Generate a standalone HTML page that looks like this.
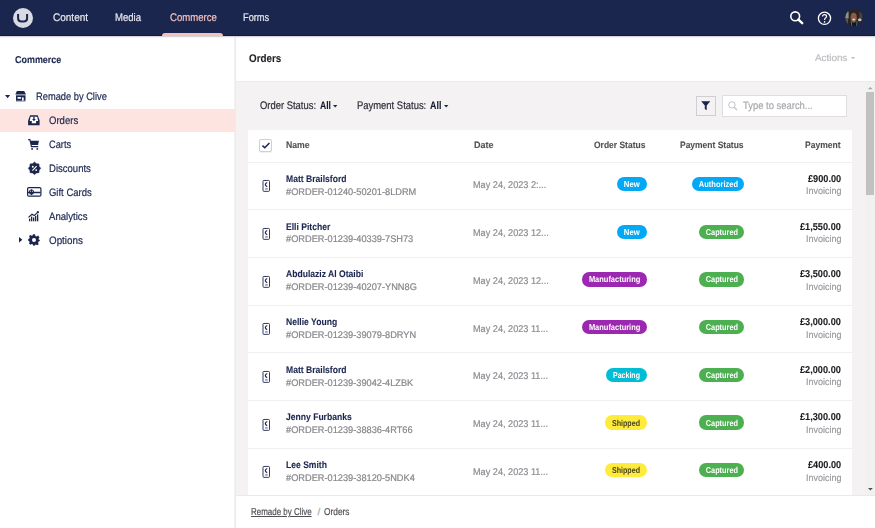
<!DOCTYPE html>
<html><head><meta charset="utf-8">
<style>
html,body{margin:0;padding:0}
body{width:875px;height:528px;overflow:hidden;position:relative;background:#f4f2f3;font-family:"Liberation Sans",sans-serif}
.t{position:absolute;white-space:nowrap;line-height:1;text-rendering:geometricPrecision}
.box{position:absolute}
svg{position:absolute;overflow:visible}
.bd{position:absolute;height:14.4px;border-radius:7.2px;display:flex;align-items:center;justify-content:center;font-size:8.6px;font-weight:700;line-height:1}
.bd span{display:inline-block;white-space:nowrap;padding-top:0.5px;text-rendering:geometricPrecision}
.hl{position:absolute;left:248.4px;width:603.4px;height:1px;background:#efeff1}
.oi{position:absolute}
</style></head>
<body>
<!-- header -->
<div class="box" style="left:0;top:0;width:875px;height:35px;background:#1b264f"></div>
<div class="box" style="left:0;top:35px;width:875px;height:1px;background:#0f1a44"></div>

<div class="box" style="left:162px;top:32.5px;width:61px;height:3px;background:#f5c1bc;border-radius:3px 3px 0 0"></div>
<svg style="left:13px;top:8px" width="20" height="20" viewBox="0 0 20 20"><circle cx="10" cy="10" r="10" fill="#d9dbe3"/><path d="M5.1 5.9 V10.2 Q5.1 13.5 8.6 13.5 H10.6 Q14.1 13.5 14.1 10.2 V5.9" fill="none" stroke="#1b264f" stroke-width="2"/></svg>
<!-- header right icons -->
<svg style="left:789px;top:10px" width="16" height="16" viewBox="0 0 16 16"><circle cx="6.2" cy="6.3" r="4.4" fill="none" stroke="#fff" stroke-width="1.6"/><path d="M9.4 9.6 L13.2 13.2" stroke="#fff" stroke-width="2.4" stroke-linecap="round"/></svg>
<svg style="left:817px;top:10.5px" width="15" height="15" viewBox="0 0 15 15"><circle cx="7.5" cy="7.3" r="6.1" fill="none" stroke="#fff" stroke-width="1.3"/><path d="M5.5 5.6 C5.5 4.3 6.4 3.6 7.5 3.6 C8.7 3.6 9.5 4.3 9.5 5.4 C9.5 6.8 7.6 7 7.6 8.6 L7.6 9.1" fill="none" stroke="#fff" stroke-width="1.2"/><circle cx="7.6" cy="10.9" r="0.8" fill="#fff"/></svg>
<svg style="left:844.5px;top:9.3px" width="18" height="18" viewBox="0 0 18 18"><defs><clipPath id="avc"><circle cx="8.9" cy="8.55" r="8.6"/></clipPath><filter id="bl" x="-20%" y="-20%" width="140%" height="140%"><feGaussianBlur stdDeviation="0.6"/></filter></defs><g clip-path="url(#avc)"><rect width="18" height="18" fill="#2b2522"/><g filter="url(#bl)"><rect x="-1" y="2.5" width="4.6" height="7" fill="#8c9488"/><rect x="-1" y="10" width="4" height="5" fill="#5b554c"/><ellipse cx="14.8" cy="10.8" rx="1.9" ry="1.5" fill="#c4bfb9"/><rect x="14.5" y="3" width="4" height="6" fill="#4d443e"/><ellipse cx="8.7" cy="8.6" rx="3.1" ry="4.8" fill="#8a5c45"/><ellipse cx="8.8" cy="10.5" rx="1.5" ry="1" fill="#ddd0c8"/><rect x="5" y="14" width="8" height="5" fill="#121212"/><path d="M6.3 12.5 L6.9 17.5 M12 12.5 L11.6 17.5" stroke="#3a86a5" stroke-width="0.9"/></g></g></svg>

<!-- sidebar -->
<div class="box" style="left:0;top:37px;width:235px;height:491px;background:#fff"></div>
<div class="box" style="left:234px;top:37px;width:2px;height:491px;background:linear-gradient(90deg,#f5f5f6,#e9e9eb)"></div>
<div class="box" style="left:0;top:109px;width:235px;height:22.5px;background:#fde4e1"></div>
<svg style="left:5px;top:94.6px" width="6" height="4" viewBox="0 0 6 4"><path d="M0 0 H5.2 L2.6 3.2 Z" fill="#1b264f"/></svg>
<svg style="left:15px;top:91px" width="11.5" height="11" viewBox="0 0 11.5 11"><path d="M1.9 0 H9.2 L11 3.5 H0.3 Z" fill="#1b264f"/><rect x="1" y="4.3" width="9.5" height="5.4" fill="#1b264f"/><rect x="2.4" y="5.9" width="3.8" height="1.9" rx="0.9" fill="#fff"/><rect x="7" y="6.4" width="1.7" height="3.3" fill="#fff"/><rect x="1" y="9.7" width="9.5" height="1" fill="#1b264f" opacity=".45"/></svg>
<svg style="left:28px;top:114.6px" width="12.5" height="10.5" viewBox="0 0 12.5 10.5"><path d="M2.1 0.2 H9.7 L11.6 5.4 V10.2 H0.1 V5.4 Z" fill="#1b264f"/><path d="M2.6 1.8 H9.2 L10.1 5.9 H8.1 V8.3 H3.8 V5.9 H1.7 Z" fill="#fff"/><rect x="5.3" y="1.8" width="1.3" height="2.6" fill="#1b264f"/><path d="M4.1 4 H7.8 L5.95 6.3 Z" fill="#1b264f"/></svg>
<svg style="left:28.4px;top:138.6px" width="11.5" height="11.5" viewBox="0 0 11.5 11.5"><path d="M0.2 0.7 H1.9 L3.5 7.6 H10.2" fill="none" stroke="#1b264f" stroke-width="1.2"/><path d="M2.3 1.7 H10.9 L10.1 5.9 H3.3 Z" fill="#1b264f"/><circle cx="4.1" cy="9.9" r="0.95" fill="#1b264f"/><circle cx="9.3" cy="9.9" r="0.95" fill="#1b264f"/></svg>
<svg style="left:27.5px;top:161.8px" width="13" height="13" viewBox="0 0 13 13"><path d="M6.50 0.10 L8.41 1.68 L10.88 1.92 L11.12 4.39 L12.70 6.30 L11.12 8.21 L10.88 10.68 L8.41 10.92 L6.50 12.50 L4.59 10.92 L2.12 10.68 L1.88 8.21 L0.30 6.30 L1.88 4.39 L2.12 1.92 L4.59 1.68 Z" fill="#1b264f" stroke="#1b264f" stroke-width="0.6" stroke-linejoin="round"/><path d="M4.4 8.6 L8.6 4.2" stroke="#fff" stroke-width="1.1"/><circle cx="4.8" cy="4.7" r="0.95" fill="#fff"/><circle cx="8.2" cy="8.1" r="0.95" fill="#fff"/></svg>
<svg style="left:27px;top:187px" width="14.5" height="10" viewBox="0 0 14.5 10"><rect x="0.6" y="0.6" width="13.3" height="8.6" rx="1.2" fill="none" stroke="#1b264f" stroke-width="1.2"/><path d="M1 5.5 H13.5" stroke="#1b264f" stroke-width="1.5"/><circle cx="4.5" cy="5" r="2" fill="none" stroke="#1b264f" stroke-width="1.1"/><path d="M4.5 2.5 V8" stroke="#1b264f" stroke-width="1"/></svg>
<svg style="left:28.3px;top:210.8px" width="11" height="10.5" viewBox="0 0 11 10.5"><path d="M0.5 6.4 L4 3.2 L6.2 4.6 L9.6 1.4" fill="none" stroke="#1b264f" stroke-width="1.2"/><circle cx="9.9" cy="1.2" r="1.1" fill="#1b264f"/><rect x="1" y="7.6" width="1.3" height="2.7" fill="#1b264f"/><rect x="3" y="5.6" width="1.3" height="4.7" fill="#1b264f"/><rect x="5" y="6.4" width="1.3" height="3.9" fill="#1b264f"/><rect x="7" y="4.8" width="1.3" height="5.5" fill="#1b264f"/><rect x="9" y="3.4" width="1.3" height="6.9" fill="#1b264f"/></svg>
<svg style="left:18.9px;top:236.8px" width="4" height="6" viewBox="0 0 4 6"><path d="M0 0 L3.4 2.7 L0 5.4 Z" fill="#1b264f"/></svg>
<svg style="left:28px;top:234px" width="12" height="12" viewBox="0 0 12 12"><path d="M5 0.2 H7 L7.4 1.9 L8.6 2.4 L10.1 1.5 L10.5 1.9 L11.5 3.4 L10.5 4.7 L10.8 5.6 L11.8 6 V7 L10.6 7.6 L10.1 8.7 L10.7 10.2 L9.3 11.3 L8 10.5 L7 11 L6.6 11.8 H5.4 L4.9 10.5 L3.8 10 L2.4 10.8 L1 9.6 L1.6 8.2 L1.2 7.2 L0.2 6.8 V5 L1.4 4.6 L1.7 3.6 L1 2.1 L2.4 0.9 L3.7 1.8 L4.6 1.5 Z" fill="#1b264f"/><circle cx="6" cy="6" r="2" fill="#fff"/></svg>

<!-- main header -->
<div class="box" style="left:236px;top:37px;width:639px;height:44px;background:#fff"></div>
<div class="box" style="left:236px;top:81px;width:639px;height:1px;background:#ebebee"></div>
<svg style="left:851px;top:56.9px" width="5" height="3" viewBox="0 0 5 3"><path d="M0 0 H4.2 L2.1 2.2 Z" fill="#bdbdc2"/></svg>

<!-- filter carets -->
<svg style="left:333.4px;top:104.7px" width="5" height="3" viewBox="0 0 5 3"><path d="M0 0 H4.4 L2.2 2.4 Z" fill="#1b264f"/></svg>
<svg style="left:443.6px;top:104.7px" width="5" height="3" viewBox="0 0 5 3"><path d="M0 0 H4.4 L2.2 2.4 Z" fill="#1b264f"/></svg>
<!-- filter button -->
<div class="box" style="left:696.2px;top:96px;width:17.4px;height:17.7px;border:1px solid #cfcfd3;background:#f4f2f3"></div>
<svg style="left:700.8px;top:101.2px" width="10" height="10" viewBox="0 0 10 10"><path d="M0.2 0.2 H9.3 L5.7 4.4 V9.3 L3.8 8 V4.4 Z" fill="#1b264f"/></svg>
<!-- search box -->
<div class="box" style="left:722.4px;top:95.3px;width:122.6px;height:19.6px;border:1px solid #dedee2;background:#fff"></div>
<svg style="left:727.6px;top:101.2px" width="10" height="10" viewBox="0 0 10 10"><circle cx="3.9" cy="3.9" r="3.2" fill="none" stroke="#c3c3c8" stroke-width="1"/><path d="M6.3 6.3 L9 9" stroke="#c3c3c8" stroke-width="1.3"/></svg>

<!-- table card -->
<div class="box" style="left:248.4px;top:129.6px;width:603.4px;height:366px;background:#fff"></div>
<div class="hl" style="top:161.6px"></div><div class="hl" style="top:209.3px"></div><div class="hl" style="top:257.0px"></div><div class="hl" style="top:304.7px"></div><div class="hl" style="top:352.4px"></div><div class="hl" style="top:400.1px"></div><div class="hl" style="top:447.8px"></div>
<div class="box" style="left:259.2px;top:139.1px;width:10.8px;height:10.8px;border:1px solid #d0d0d4;border-radius:2px;background:#fff;box-shadow:0 0.5px 1px rgba(0,0,0,.06)"></div>
<svg style="left:261px;top:141px" width="10" height="9" viewBox="0 0 10 9"><path d="M1.5 4.6 L3.8 6.8 L8.4 2" fill="none" stroke="#1b264f" stroke-width="1.5"/></svg>
<svg class="oi" style="left:262.4px;top:180.2px" width="8.5" height="12" viewBox="0 0 8.5 12"><rect x="1.0" y="0.45" width="6.5" height="10.9" rx="0.9" fill="none" stroke="#2a3258" stroke-width="0.95"/><path d="M5.2 2.4 C4 3 3.3 3.8 3.3 4.6 C3.3 5.4 4 6.2 5.2 6.8" fill="none" stroke="#1b264f" stroke-width="1.15"/><rect x="3.1" y="8.2" width="2.6" height="1.4" fill="#1b264f" opacity=".55"/></svg>
<svg class="oi" style="left:262.4px;top:227.9px" width="8.5" height="12" viewBox="0 0 8.5 12"><rect x="1.0" y="0.45" width="6.5" height="10.9" rx="0.9" fill="none" stroke="#2a3258" stroke-width="0.95"/><path d="M5.2 2.4 C4 3 3.3 3.8 3.3 4.6 C3.3 5.4 4 6.2 5.2 6.8" fill="none" stroke="#1b264f" stroke-width="1.15"/><rect x="3.1" y="8.2" width="2.6" height="1.4" fill="#1b264f" opacity=".55"/></svg>
<svg class="oi" style="left:262.4px;top:275.6px" width="8.5" height="12" viewBox="0 0 8.5 12"><rect x="1.0" y="0.45" width="6.5" height="10.9" rx="0.9" fill="none" stroke="#2a3258" stroke-width="0.95"/><path d="M5.2 2.4 C4 3 3.3 3.8 3.3 4.6 C3.3 5.4 4 6.2 5.2 6.8" fill="none" stroke="#1b264f" stroke-width="1.15"/><rect x="3.1" y="8.2" width="2.6" height="1.4" fill="#1b264f" opacity=".55"/></svg>
<svg class="oi" style="left:262.4px;top:323.3px" width="8.5" height="12" viewBox="0 0 8.5 12"><rect x="1.0" y="0.45" width="6.5" height="10.9" rx="0.9" fill="none" stroke="#2a3258" stroke-width="0.95"/><path d="M5.2 2.4 C4 3 3.3 3.8 3.3 4.6 C3.3 5.4 4 6.2 5.2 6.8" fill="none" stroke="#1b264f" stroke-width="1.15"/><rect x="3.1" y="8.2" width="2.6" height="1.4" fill="#1b264f" opacity=".55"/></svg>
<svg class="oi" style="left:262.4px;top:371.0px" width="8.5" height="12" viewBox="0 0 8.5 12"><rect x="1.0" y="0.45" width="6.5" height="10.9" rx="0.9" fill="none" stroke="#2a3258" stroke-width="0.95"/><path d="M5.2 2.4 C4 3 3.3 3.8 3.3 4.6 C3.3 5.4 4 6.2 5.2 6.8" fill="none" stroke="#1b264f" stroke-width="1.15"/><rect x="3.1" y="8.2" width="2.6" height="1.4" fill="#1b264f" opacity=".55"/></svg>
<svg class="oi" style="left:262.4px;top:418.7px" width="8.5" height="12" viewBox="0 0 8.5 12"><rect x="1.0" y="0.45" width="6.5" height="10.9" rx="0.9" fill="none" stroke="#2a3258" stroke-width="0.95"/><path d="M5.2 2.4 C4 3 3.3 3.8 3.3 4.6 C3.3 5.4 4 6.2 5.2 6.8" fill="none" stroke="#1b264f" stroke-width="1.15"/><rect x="3.1" y="8.2" width="2.6" height="1.4" fill="#1b264f" opacity=".55"/></svg>
<svg class="oi" style="left:262.4px;top:466.4px" width="8.5" height="12" viewBox="0 0 8.5 12"><rect x="1.0" y="0.45" width="6.5" height="10.9" rx="0.9" fill="none" stroke="#2a3258" stroke-width="0.95"/><path d="M5.2 2.4 C4 3 3.3 3.8 3.3 4.6 C3.3 5.4 4 6.2 5.2 6.8" fill="none" stroke="#1b264f" stroke-width="1.15"/><rect x="3.1" y="8.2" width="2.6" height="1.4" fill="#1b264f" opacity=".55"/></svg>
<div class="bd" style="left:616.8px;top:176.9px;width:29.9px;background:#03a9f4;color:#fff"><span style="transform:scaleX(0.901)">New</span></div>
<div class="bd" style="left:691.7px;top:176.9px;width:52.6px;background:#03a9f4;color:#fff"><span style="transform:scaleX(0.872)">Authorized</span></div>
<div class="bd" style="left:616.8px;top:224.6px;width:29.9px;background:#03a9f4;color:#fff"><span style="transform:scaleX(0.901)">New</span></div>
<div class="bd" style="left:698.6px;top:224.6px;width:45.7px;background:#4caf50;color:#fff"><span style="transform:scaleX(0.854)">Captured</span></div>
<div class="bd" style="left:581.8px;top:272.3px;width:64.9px;background:#9c27b0;color:#fff"><span style="transform:scaleX(0.869)">Manufacturing</span></div>
<div class="bd" style="left:698.6px;top:272.3px;width:45.7px;background:#4caf50;color:#fff"><span style="transform:scaleX(0.854)">Captured</span></div>
<div class="bd" style="left:581.8px;top:320.0px;width:64.9px;background:#9c27b0;color:#fff"><span style="transform:scaleX(0.869)">Manufacturing</span></div>
<div class="bd" style="left:698.6px;top:320.0px;width:45.7px;background:#4caf50;color:#fff"><span style="transform:scaleX(0.854)">Captured</span></div>
<div class="bd" style="left:606.3px;top:367.7px;width:40.4px;background:#00bcd4;color:#fff"><span style="transform:scaleX(0.816)">Packing</span></div>
<div class="bd" style="left:698.6px;top:367.7px;width:45.7px;background:#4caf50;color:#fff"><span style="transform:scaleX(0.854)">Captured</span></div>
<div class="bd" style="left:605.1px;top:415.4px;width:41.6px;background:#ffeb3b;color:#4a4420"><span style="transform:scaleX(0.829)">Shipped</span></div>
<div class="bd" style="left:698.6px;top:415.4px;width:45.7px;background:#4caf50;color:#fff"><span style="transform:scaleX(0.854)">Captured</span></div>
<div class="bd" style="left:605.1px;top:463.1px;width:41.6px;background:#ffeb3b;color:#4a4420"><span style="transform:scaleX(0.829)">Shipped</span></div>
<div class="bd" style="left:698.6px;top:463.1px;width:45.7px;background:#4caf50;color:#fff"><span style="transform:scaleX(0.854)">Captured</span></div>

<!-- scrollbar -->
<div class="box" style="left:865px;top:82px;width:10px;height:413px;background:#f1f1f1"></div>
<div class="box" style="left:866px;top:92px;width:8px;height:103px;background:#c1c1c1"></div>
<svg style="left:867.7px;top:86.6px" width="5" height="3" viewBox="0 0 5 3"><path d="M0 2.2 H4.6 L2.3 0 Z" fill="#a3a3a3"/></svg>
<svg style="left:867.5px;top:488.2px" width="5" height="3" viewBox="0 0 5 3"><path d="M0 0 H4.8 L2.4 2.6 Z" fill="#505050"/></svg>

<!-- footer -->
<div class="box" style="left:236px;top:495px;width:639px;height:33px;background:#fff"></div>
<div class="box" style="left:236px;top:494.5px;width:639px;height:1px;background:#e9e9ec"></div>

<div class="box" style="left:0;top:36px;width:875px;height:1.5px;background:linear-gradient(rgba(0,0,20,.16),rgba(0,0,20,0))"></div>
<span class="t" style="left:52.80px;top:13px;transform-origin:0 0;font-size:11px;font-weight:400;color:#e6e7ee;transform:scaleX(0.9098);-webkit-text-stroke:0.2px currentColor;">Content</span>
<span class="t" style="left:115.40px;top:13px;transform-origin:0 0;font-size:11px;font-weight:400;color:#e6e7ee;transform:scaleX(0.8689);-webkit-text-stroke:0.2px currentColor;">Media</span>
<span class="t" style="left:169.50px;top:13px;transform-origin:0 0;font-size:11px;font-weight:400;color:#f5c1bc;transform:scaleX(0.8720);-webkit-text-stroke:0.2px currentColor;">Commerce</span>
<span class="t" style="left:243.40px;top:13px;transform-origin:0 0;font-size:11px;font-weight:400;color:#e6e7ee;transform:scaleX(0.8401);-webkit-text-stroke:0.2px currentColor;">Forms</span>
<span class="t" style="left:14.50px;top:56px;transform-origin:0 0;font-size:10px;font-weight:700;color:#1b264f;transform:scaleX(0.8959);-webkit-text-stroke:0.1px currentColor;">Commerce</span>
<span class="t" style="left:36.20px;top:92px;transform-origin:0 0;font-size:10.8px;font-weight:400;color:#1b264f;transform:scaleX(0.8613);-webkit-text-stroke:0.2px currentColor;">Remade by Clive</span>
<span class="t" style="left:49.10px;top:116px;transform-origin:0 0;font-size:10.8px;font-weight:400;color:#1b264f;transform:scaleX(0.8840);-webkit-text-stroke:0.2px currentColor;">Orders</span>
<span class="t" style="left:49.10px;top:140px;transform-origin:0 0;font-size:10.8px;font-weight:400;color:#1b264f;transform:scaleX(0.8562);-webkit-text-stroke:0.2px currentColor;">Carts</span>
<span class="t" style="left:49.10px;top:164px;transform-origin:0 0;font-size:10.8px;font-weight:400;color:#1b264f;transform:scaleX(0.8832);-webkit-text-stroke:0.2px currentColor;">Discounts</span>
<span class="t" style="left:49.10px;top:188px;transform-origin:0 0;font-size:10.8px;font-weight:400;color:#1b264f;transform:scaleX(0.8781);-webkit-text-stroke:0.2px currentColor;">Gift Cards</span>
<span class="t" style="left:49.10px;top:212px;transform-origin:0 0;font-size:10.8px;font-weight:400;color:#1b264f;transform:scaleX(0.8903);-webkit-text-stroke:0.2px currentColor;">Analytics</span>
<span class="t" style="left:49.10px;top:236px;transform-origin:0 0;font-size:10.8px;font-weight:400;color:#1b264f;transform:scaleX(0.9098);-webkit-text-stroke:0.2px currentColor;">Options</span>
<span class="t" style="left:248.60px;top:54px;transform-origin:0 0;font-size:11px;font-weight:700;color:#1f1f24;transform:scaleX(0.8928);-webkit-text-stroke:0.1px currentColor;">Orders</span>
<span class="t" style="left:814.80px;top:54px;transform-origin:0 0;font-size:9.8px;font-weight:400;color:#bdbdc2;transform:scaleX(1.0053);-webkit-text-stroke:0.2px currentColor;">Actions</span>
<span class="t" style="left:260.00px;top:101px;transform-origin:0 0;font-size:11px;font-weight:400;color:#2e2e3a;transform:scaleX(0.8568);-webkit-text-stroke:0.2px currentColor;">Order Status:</span>
<span class="t" style="left:320.30px;top:101px;transform-origin:0 0;font-size:11px;font-weight:700;color:#161a30;transform:scaleX(0.7786);-webkit-text-stroke:0.1px currentColor;">All</span>
<span class="t" style="left:356.90px;top:101px;transform-origin:0 0;font-size:11px;font-weight:400;color:#2e2e3a;transform:scaleX(0.8580);-webkit-text-stroke:0.2px currentColor;">Payment Status:</span>
<span class="t" style="left:429.50px;top:101px;transform-origin:0 0;font-size:11px;font-weight:700;color:#161a30;transform:scaleX(0.8071);-webkit-text-stroke:0.1px currentColor;">All</span>
<span class="t" style="left:742.50px;top:101px;transform-origin:0 0;font-size:10.5px;font-weight:400;color:#a9a9ae;transform:scaleX(0.8982);-webkit-text-stroke:0.2px currentColor;">Type to search...</span>
<span class="t" style="left:286.00px;top:141px;transform-origin:0 0;font-size:9.3px;font-weight:700;color:#515054;transform:scaleX(0.9344);-webkit-text-stroke:0.1px currentColor;">Name</span>
<span class="t" style="left:473.70px;top:141px;transform-origin:0 0;font-size:9.3px;font-weight:700;color:#515054;transform:scaleX(0.9710);-webkit-text-stroke:0.1px currentColor;">Date</span>
<span class="t" style="left:594.40px;top:141px;transform-origin:0 0;font-size:9.3px;font-weight:700;color:#515054;transform:scaleX(0.9120);-webkit-text-stroke:0.1px currentColor;">Order Status</span>
<span class="t" style="left:679.80px;top:141px;transform-origin:0 0;font-size:9.3px;font-weight:700;color:#515054;transform:scaleX(0.9112);-webkit-text-stroke:0.1px currentColor;">Payment Status</span>
<span class="t" style="left:805.30px;top:141px;transform-origin:0 0;font-size:9.3px;font-weight:700;color:#515054;transform:scaleX(0.9183);-webkit-text-stroke:0.1px currentColor;">Payment</span>
<span class="t" style="left:286.10px;top:175px;transform-origin:0 0;font-size:9.6px;font-weight:700;color:#1b264f;transform:scaleX(0.8933);-webkit-text-stroke:0.1px currentColor;">Matt Brailsford</span>
<span class="t" style="left:286.00px;top:188px;transform-origin:0 0;font-size:9.6px;font-weight:400;color:#86868c;transform:scaleX(0.9620);-webkit-text-stroke:0.2px currentColor;">#ORDER-01240-50201-8LDRM</span>
<span class="t" style="left:473.30px;top:181px;transform-origin:0 0;font-size:9.8px;font-weight:400;color:#8c8c92;transform:scaleX(0.9331);-webkit-text-stroke:0.2px currentColor;">May 24, 2023 2:...</span>
<span class="t" style="left:807.50px;top:175px;transform-origin:0 0;font-size:10px;font-weight:700;color:#1b1b1f;transform:scaleX(0.9184);-webkit-text-stroke:0.1px currentColor;">£900.00</span>
<span class="t" style="left:805.70px;top:187px;transform-origin:0 0;font-size:9.6px;font-weight:400;color:#9a9aa0;transform:scaleX(0.9406);-webkit-text-stroke:0.2px currentColor;">Invoicing</span>
<span class="t" style="left:286.10px;top:223px;transform-origin:0 0;font-size:9.6px;font-weight:700;color:#1b264f;transform:scaleX(0.8933);-webkit-text-stroke:0.1px currentColor;">Elli Pitcher</span>
<span class="t" style="left:286.00px;top:235px;transform-origin:0 0;font-size:9.6px;font-weight:400;color:#86868c;transform:scaleX(0.9620);-webkit-text-stroke:0.2px currentColor;">#ORDER-01239-40339-7SH73</span>
<span class="t" style="left:473.30px;top:229px;transform-origin:0 0;font-size:9.8px;font-weight:400;color:#8c8c92;transform:scaleX(0.9331);-webkit-text-stroke:0.2px currentColor;">May 24, 2023 12...</span>
<span class="t" style="left:799.84px;top:223px;transform-origin:0 0;font-size:10px;font-weight:700;color:#1b1b1f;transform:scaleX(0.9184);-webkit-text-stroke:0.1px currentColor;">£1,550.00</span>
<span class="t" style="left:805.70px;top:235px;transform-origin:0 0;font-size:9.6px;font-weight:400;color:#9a9aa0;transform:scaleX(0.9406);-webkit-text-stroke:0.2px currentColor;">Invoicing</span>
<span class="t" style="left:286.10px;top:270px;transform-origin:0 0;font-size:9.6px;font-weight:700;color:#1b264f;transform:scaleX(0.8933);-webkit-text-stroke:0.1px currentColor;">Abdulaziz Al Otaibi</span>
<span class="t" style="left:286.00px;top:283px;transform-origin:0 0;font-size:9.6px;font-weight:400;color:#86868c;transform:scaleX(0.9620);-webkit-text-stroke:0.2px currentColor;">#ORDER-01239-40207-YNN8G</span>
<span class="t" style="left:473.30px;top:277px;transform-origin:0 0;font-size:9.8px;font-weight:400;color:#8c8c92;transform:scaleX(0.9331);-webkit-text-stroke:0.2px currentColor;">May 24, 2023 12...</span>
<span class="t" style="left:799.84px;top:270px;transform-origin:0 0;font-size:10px;font-weight:700;color:#1b1b1f;transform:scaleX(0.9184);-webkit-text-stroke:0.1px currentColor;">£3,500.00</span>
<span class="t" style="left:805.70px;top:283px;transform-origin:0 0;font-size:9.6px;font-weight:400;color:#9a9aa0;transform:scaleX(0.9406);-webkit-text-stroke:0.2px currentColor;">Invoicing</span>
<span class="t" style="left:286.10px;top:318px;transform-origin:0 0;font-size:9.6px;font-weight:700;color:#1b264f;transform:scaleX(0.8933);-webkit-text-stroke:0.1px currentColor;">Nellie Young</span>
<span class="t" style="left:286.00px;top:331px;transform-origin:0 0;font-size:9.6px;font-weight:400;color:#86868c;transform:scaleX(0.9620);-webkit-text-stroke:0.2px currentColor;">#ORDER-01239-39079-8DRYN</span>
<span class="t" style="left:473.30px;top:325px;transform-origin:0 0;font-size:9.8px;font-weight:400;color:#8c8c92;transform:scaleX(0.9331);-webkit-text-stroke:0.2px currentColor;">May 24, 2023 11...</span>
<span class="t" style="left:799.84px;top:318px;transform-origin:0 0;font-size:10px;font-weight:700;color:#1b1b1f;transform:scaleX(0.9184);-webkit-text-stroke:0.1px currentColor;">£3,000.00</span>
<span class="t" style="left:805.70px;top:331px;transform-origin:0 0;font-size:9.6px;font-weight:400;color:#9a9aa0;transform:scaleX(0.9406);-webkit-text-stroke:0.2px currentColor;">Invoicing</span>
<span class="t" style="left:286.10px;top:366px;transform-origin:0 0;font-size:9.6px;font-weight:700;color:#1b264f;transform:scaleX(0.8933);-webkit-text-stroke:0.1px currentColor;">Matt Brailsford</span>
<span class="t" style="left:286.00px;top:379px;transform-origin:0 0;font-size:9.6px;font-weight:400;color:#86868c;transform:scaleX(0.9620);-webkit-text-stroke:0.2px currentColor;">#ORDER-01239-39042-4LZBK</span>
<span class="t" style="left:473.30px;top:372px;transform-origin:0 0;font-size:9.8px;font-weight:400;color:#8c8c92;transform:scaleX(0.9331);-webkit-text-stroke:0.2px currentColor;">May 24, 2023 11...</span>
<span class="t" style="left:799.84px;top:366px;transform-origin:0 0;font-size:10px;font-weight:700;color:#1b1b1f;transform:scaleX(0.9184);-webkit-text-stroke:0.1px currentColor;">£2,000.00</span>
<span class="t" style="left:805.70px;top:378px;transform-origin:0 0;font-size:9.6px;font-weight:400;color:#9a9aa0;transform:scaleX(0.9406);-webkit-text-stroke:0.2px currentColor;">Invoicing</span>
<span class="t" style="left:286.10px;top:413px;transform-origin:0 0;font-size:9.6px;font-weight:700;color:#1b264f;transform:scaleX(0.8933);-webkit-text-stroke:0.1px currentColor;">Jenny Furbanks</span>
<span class="t" style="left:286.00px;top:426px;transform-origin:0 0;font-size:9.6px;font-weight:400;color:#86868c;transform:scaleX(0.9620);-webkit-text-stroke:0.2px currentColor;">#ORDER-01239-38836-4RT66</span>
<span class="t" style="left:473.30px;top:420px;transform-origin:0 0;font-size:9.8px;font-weight:400;color:#8c8c92;transform:scaleX(0.9331);-webkit-text-stroke:0.2px currentColor;">May 24, 2023 11...</span>
<span class="t" style="left:799.84px;top:413px;transform-origin:0 0;font-size:10px;font-weight:700;color:#1b1b1f;transform:scaleX(0.9184);-webkit-text-stroke:0.1px currentColor;">£1,300.00</span>
<span class="t" style="left:805.70px;top:426px;transform-origin:0 0;font-size:9.6px;font-weight:400;color:#9a9aa0;transform:scaleX(0.9406);-webkit-text-stroke:0.2px currentColor;">Invoicing</span>
<span class="t" style="left:286.10px;top:461px;transform-origin:0 0;font-size:9.6px;font-weight:700;color:#1b264f;transform:scaleX(0.8933);-webkit-text-stroke:0.1px currentColor;">Lee Smith</span>
<span class="t" style="left:286.00px;top:474px;transform-origin:0 0;font-size:9.6px;font-weight:400;color:#86868c;transform:scaleX(0.9620);-webkit-text-stroke:0.2px currentColor;">#ORDER-01239-38120-5NDK4</span>
<span class="t" style="left:473.30px;top:468px;transform-origin:0 0;font-size:9.8px;font-weight:400;color:#8c8c92;transform:scaleX(0.9331);-webkit-text-stroke:0.2px currentColor;">May 24, 2023 11...</span>
<span class="t" style="left:807.50px;top:461px;transform-origin:0 0;font-size:10px;font-weight:700;color:#1b1b1f;transform:scaleX(0.9184);-webkit-text-stroke:0.1px currentColor;">£400.00</span>
<span class="t" style="left:805.70px;top:474px;transform-origin:0 0;font-size:9.6px;font-weight:400;color:#9a9aa0;transform:scaleX(0.9406);-webkit-text-stroke:0.2px currentColor;">Invoicing</span>
<span class="t" style="left:251.40px;top:508px;transform-origin:0 0;font-size:10px;font-weight:400;color:#515054;transform:scaleX(0.7965);text-decoration:underline;text-underline-offset:1px;-webkit-text-stroke:0.2px currentColor;">Remade by Clive</span>
<span class="t" style="left:317.60px;top:508px;transform-origin:0 0;font-size:10px;font-weight:400;color:#a8a8ad;-webkit-text-stroke:0.2px currentColor;">/</span>
<span class="t" style="left:323.70px;top:508px;transform-origin:0 0;font-size:10px;font-weight:400;color:#515054;transform:scaleX(0.8344);-webkit-text-stroke:0.2px currentColor;">Orders</span>
</body></html>
